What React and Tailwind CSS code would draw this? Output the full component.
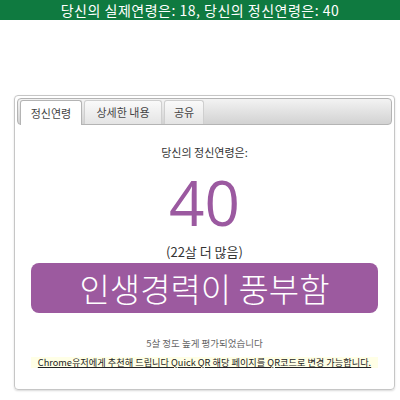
const kr = { fontFamily: '"Noto Sans CJK KR", "Noto Sans", sans-serif' };

const tabs = ['정신연령', '상세한 내용', '공유'];

export default function App() {
  return (
    <div className="w-[400px] h-[400px] bg-white overflow-hidden" style={kr}>
      <div className="h-[20px] bg-[#0f7a40] flex items-center justify-center text-[14px] leading-none text-white tracking-[0.5px]">
        당신의 실제연령은: 18, 당신의 정신연령은: 40
      </div>

      <div className="mt-[75px] ml-[14px] w-[381px] h-[295px] border border-[#c6c6c6] rounded-[4px] shadow-[0_1px_2px_rgba(0,0,0,0.15)] p-[2px] flex flex-col">
        <div className="h-[27px] border border-[#b4b4b4] rounded-[4px] bg-gradient-to-b from-[#f3f3f3] to-[#d2d2d2] flex items-end pl-[2px] gap-[2px]">
          {tabs.map((t, i) => (
            <div
              key={t}
              className={`h-[24px] flex items-center justify-center text-[11px] text-[#444] border border-b-0 rounded-t-[3px] ${
                i === 0 ? 'w-[62px] bg-white border-[#b4b4b4] -mb-px h-[25px]' : 'bg-gradient-to-b from-[#fafafa] to-[#e4e4e4] border-[#cfcfcf]'
              } ${i === 1 ? 'w-[78px]' : ''} ${i === 2 ? 'w-[40px]' : ''}`}
            >
              {t}
            </div>
          ))}
        </div>

        <div className="flex flex-col items-center px-[14px]">
          <div className="mt-[20px] text-[11px] leading-[14px] text-[#333]">당신의 정신연령은:</div>
          <div className="mt-[2px] text-[62px] leading-[82px] text-[#9b59a0]" style={{ fontFamily: '"Open Sans", "Noto Sans", sans-serif' }}>
            40
          </div>
          <div className="text-[13px] leading-[18px] text-[#333]">(22살 더 많음)</div>
          <div className="mt-[2px] w-full h-[50px] rounded-[8px] bg-[#9c5a9f] flex items-center justify-center text-white text-[33px] leading-none font-light">
            인생경력이 풍부함
          </div>
          <div className="mt-[24px] text-[9.5px] leading-[12px] text-[#666]">5살 정도 높게 평가되었습니다</div>
          <div className="mt-[8px] w-full bg-[#ffffe6] text-center text-[9.2px] leading-[11px] text-[#222] underline">
            Chrome유저에게 추천해 드립니다 Quick QR 해당 페이지를 QR코드로 변경 가능합니다.
          </div>
        </div>
      </div>
    </div>
  );
}
